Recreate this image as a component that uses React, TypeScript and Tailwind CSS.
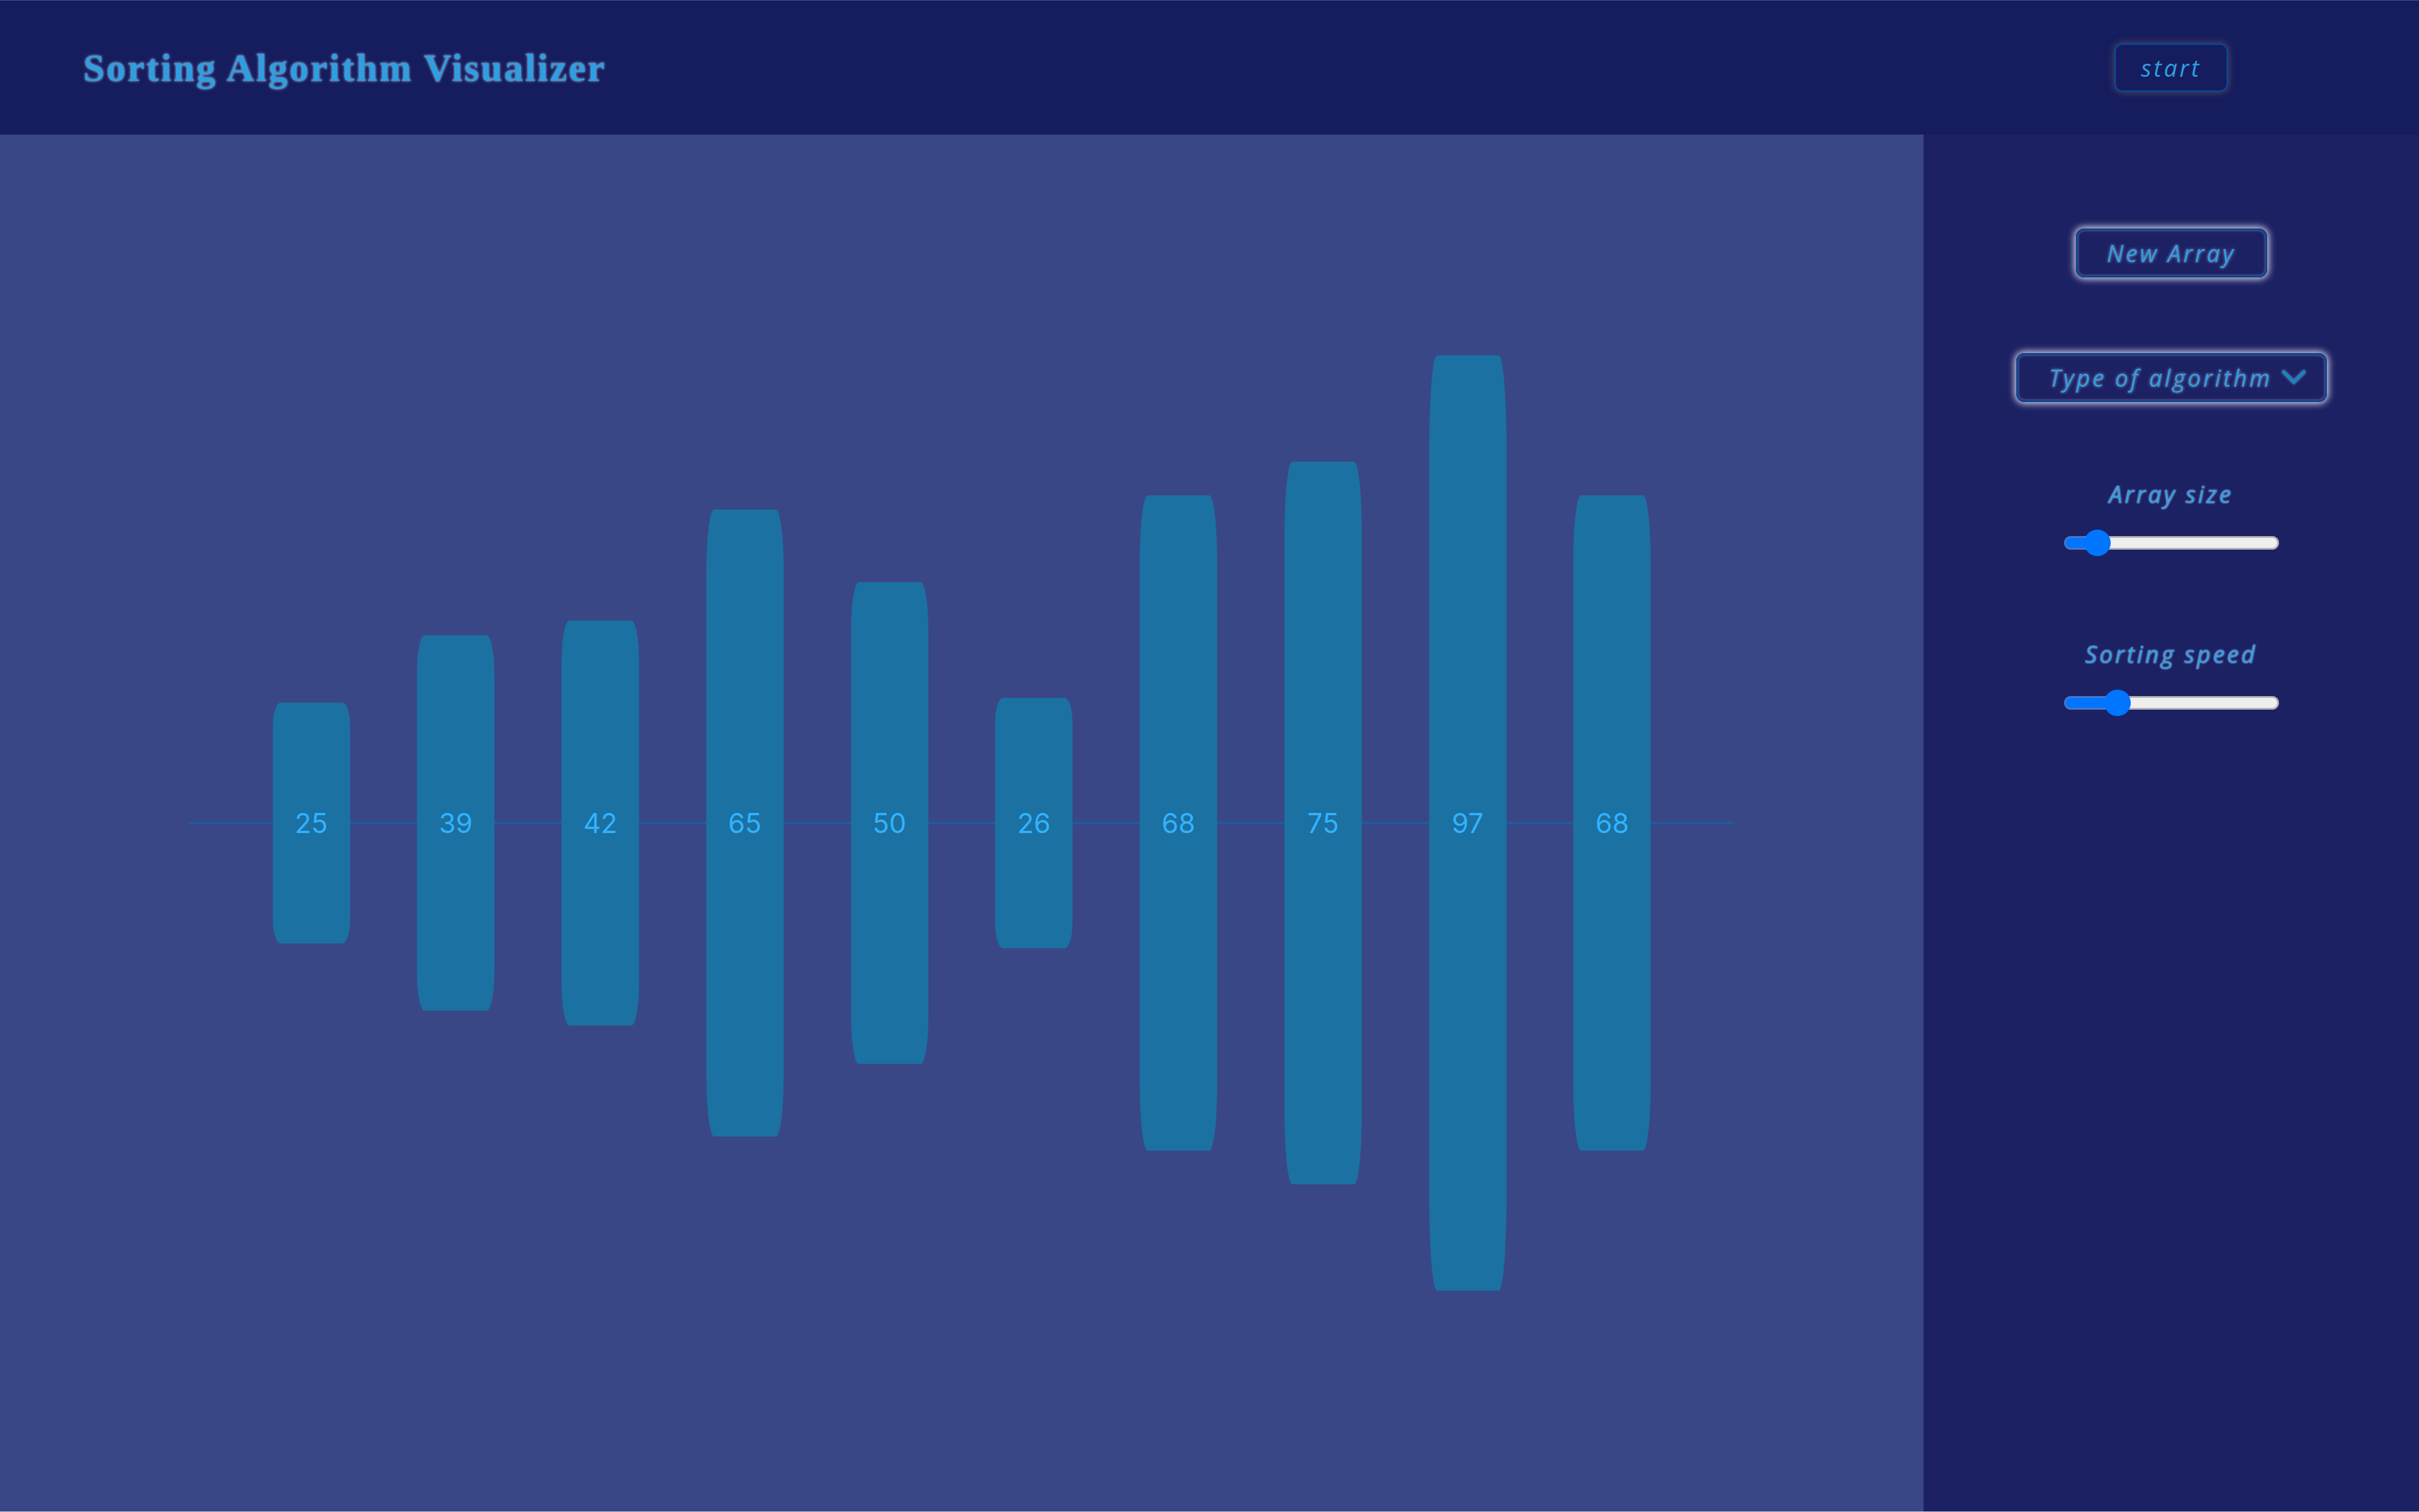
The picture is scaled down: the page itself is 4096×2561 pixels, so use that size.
import { useState } from "react";
import type { CSSProperties } from "react";

const values = [25, 39, 42, 65, 50, 26, 68, 75, 97, 68];

const glowBox =
  "border-3 border-[#0b4690] rounded-[14px] shadow-[0_0_12px_3px_rgba(235,230,245,0.9),inset_0_0_4px_0px_rgba(235,230,245,0.5)]";
const controlText =
  "font-['Open_Sans','Noto_Sans',sans-serif] italic text-[#2f9ee0]";

function Slider({ id, label, initial }: { id: string; label: string; initial: number }) {
  const [value, setValue] = useState(initial);
  return (
    <div className="flex flex-col items-center gap-[30px]">
      <label
        htmlFor={id}
        className={`${controlText} text-[40px] leading-14 tracking-[4px] [text-shadow:0_0_3px_rgba(225,220,240,0.9)]`}
      >
        {label}
      </label>
      <input
        id={id}
        type="range"
        min={0}
        max={100}
        value={value}
        onChange={(e) => setValue(Number(e.target.value))}
        style={{ "--fill": `${value}%` } as CSSProperties}
        className="h-12 w-[364px] cursor-pointer appearance-none bg-transparent [&::-webkit-slider-runnable-track]:box-border [&::-webkit-slider-runnable-track]:h-[23px] [&::-webkit-slider-runnable-track]:rounded-full [&::-webkit-slider-runnable-track]:border-3 [&::-webkit-slider-runnable-track]:border-transparent [&::-webkit-slider-runnable-track]:[background:linear-gradient(to_right,#0075ff_var(--fill),#efefef_var(--fill))_padding-box,linear-gradient(to_right,#4a79c4_var(--fill),#b2b2b2_var(--fill))_border-box] [&::-webkit-slider-thumb]:-mt-[14px] [&::-webkit-slider-thumb]:size-[45px] [&::-webkit-slider-thumb]:appearance-none [&::-webkit-slider-thumb]:rounded-full [&::-webkit-slider-thumb]:bg-[#0075ff]"
      />
    </div>
  );
}

export default function App() {
  return (
    <div className="flex h-screen flex-col border-b border-[#c9c9dc] bg-[#394787]">
      <header className="flex h-[228px] shrink-0 items-center border-t border-[#4a4f86] bg-[#161d5e]">
        <h1 className="flex-1 pl-[141px] font-['Liberation_Serif',serif] text-[65px] font-bold leading-20 tracking-[3px] text-[#2f9ee0] [text-shadow:0_0_4px_rgba(225,220,240,0.8)]">
          Sorting Algorithm Visualizer
        </h1>
        <div className="flex w-[839px] justify-center">
          <button
            type="button"
            className={`${controlText} h-[83px] w-[193px] rounded-[14px] border-3 border-[#0b4690] text-[40px] leading-14 tracking-[4px] shadow-[0_0_12px_1px_rgba(130,110,90,0.5)]`}
          >
            start
          </button>
        </div>
      </header>

      <div className="flex min-h-0 flex-1">
        <main className="relative flex flex-1 items-center justify-center">
          <div className="absolute inset-x-[320px] top-1/2 h-[3px] -translate-y-1/2 bg-[#1c60a2]" />
          <div className="relative flex h-full w-[2334px] items-center justify-between">
            {values.map((v, i) => (
              <div
                key={i}
                style={{ height: `${v * 0.7}%` }}
                className="flex w-[131px] items-center justify-center rounded-[10%] bg-[#1b71a2] font-['Inter',sans-serif] text-[46px] leading-14 text-[#32b2ff]"
              >
                {v}
              </div>
            ))}
          </div>
        </main>

        <aside className="flex w-[839px] flex-col items-center gap-32 bg-[#1c2163] pt-[159px]">
          <button
            type="button"
            className={`${controlText} ${glowBox} h-[83px] w-[324px] text-[40px] leading-14 tracking-[4px] [text-shadow:0_0_5px_rgba(225,220,240,0.6)]`}
          >
            New Array
          </button>
          <div className="relative">
            <select
              aria-label="Type of algorithm"
              defaultValue=""
              className={`${controlText} ${glowBox} block h-[83px] w-[526px] appearance-none bg-transparent pl-[53px] text-[40px] leading-14 tracking-[4px] [text-shadow:0_0_5px_rgba(225,220,240,0.6)]`}
            >
              <option value="">Type of algorithm</option>
              <option value="bubble">Bubble sort</option>
              <option value="merge">Merge sort</option>
              <option value="quick">Quick sort</option>
            </select>
            <svg
              aria-hidden="true"
              viewBox="0 0 40 24"
              className="pointer-events-none absolute top-[30px] right-9 h-6 w-10 overflow-visible drop-shadow-[0_0_2px_rgba(225,220,240,0.5)]"
            >
              <path d="M3 2 20 19 37 2" fill="none" stroke="#1b84bf" strokeWidth="6" strokeLinecap="round" />
            </svg>
          </div>
          <div className="flex flex-col gap-[137px]">
            <Slider id="array-size" label="Array size" initial={10} />
            <Slider id="sorting-speed" label="Sorting speed" initial={21} />
          </div>
        </aside>
      </div>
    </div>
  );
}
